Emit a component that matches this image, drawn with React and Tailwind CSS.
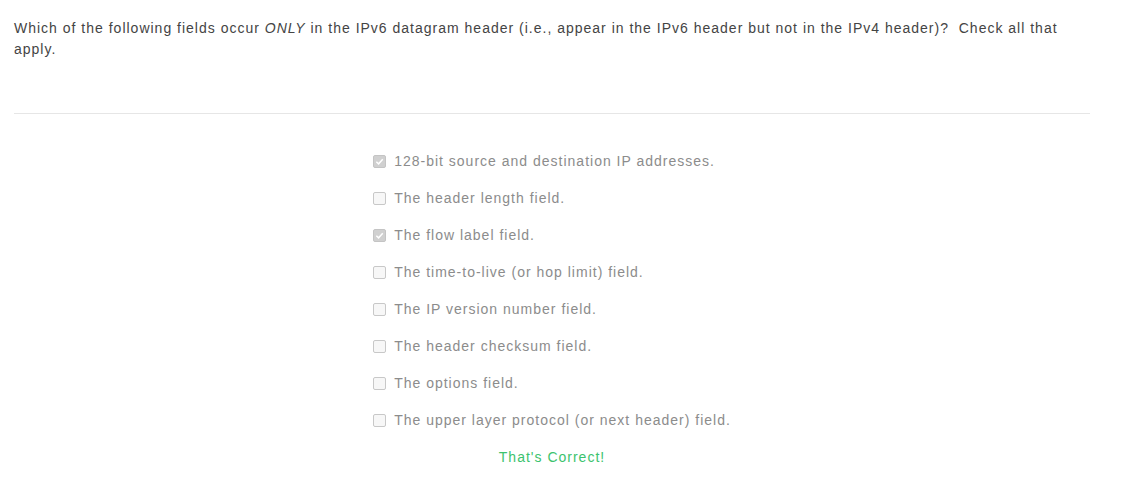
const options = [
  { label: "128-bit source and destination IP addresses.", checked: true },
  { label: "The header length field.", checked: false },
  { label: "The flow label field.", checked: true },
  { label: "The time-to-live (or hop limit) field.", checked: false },
  { label: "The IP version number field.", checked: false },
  { label: "The header checksum field.", checked: false },
  { label: "The options field.", checked: false },
  { label: "The upper layer protocol (or next header) field.", checked: false },
];

const Box = ({ checked }) => (
  <span
    className={`flex items-center justify-center w-[13px] h-[13px] rounded-[2px] border shrink-0 ${
      checked ? "bg-[#d0d0d0] border-[#c4c4c4]" : "bg-[#f7f7f7] border-[#c8c8c8]"
    }`}
  >
    {checked && (
      <svg width="9" height="9" viewBox="0 0 10 10">
        <path d="M1.5 5.2 L4 7.6 L8.6 2.4" fill="none" stroke="#ffffff" strokeWidth="1.6" />
      </svg>
    )}
  </span>
);

const App = () => {
  return (
    <div className="min-h-screen bg-white font-['Liberation_Sans',Arial,sans-serif] text-[14px] tracking-[1px]">
      <div className="w-[1076px] ml-[14px] pt-[18px]">
        <p className="text-[#444] leading-[21px]">
          Which of the following fields occur <em>ONLY</em> in the IPv6 datagram header (i.e., appear in the IPv6 header but not in the IPv4 header)?&nbsp; Check all that apply.
        </p>
        <hr className="mt-[53px] border-0 border-t border-[#e6e6e6]" />
        <div className="mt-[37px] text-center">
          <div className="inline-block text-left">
            <div className="flex flex-col gap-[16px]">
              {options.map((o) => (
                <label key={o.label} className="flex items-center gap-[8px] h-[21px] text-[#8c8c8c]">
                  <Box checked={o.checked} />
                  <span>{o.label}</span>
                </label>
              ))}
            </div>
          </div>
          <p className="mt-[16px] leading-[21px] text-[#3cc36e]">That's Correct!</p>
        </div>
      </div>
    </div>
  );
};

export default App;
